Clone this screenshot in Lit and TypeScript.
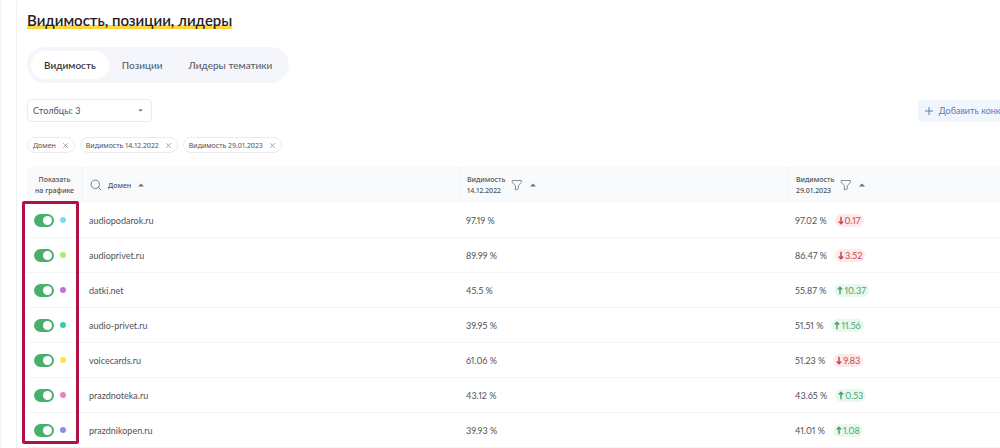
import { LitElement, html, css, svg } from "lit";
import { customElement, property, state } from "lit/decorators.js";
import { classMap } from "lit/directives/class-map.js";
import { styleMap } from "lit/directives/style-map.js";

interface Row {
  domain: string;
  color: string;
  before: string;
  after: string;
  delta: string;
  up: boolean;
}

const ROWS: Row[] = [
  { domain: "audiopodarok.ru", color: "#7fdcf0", before: "97.19 %", after: "97.02 %", delta: "0.17", up: false },
  { domain: "audioprivet.ru", color: "#a5ee72", before: "89.99 %", after: "86.47 %", delta: "3.52", up: false },
  { domain: "datki.net", color: "#c072e0", before: "45.5 %", after: "55.87 %", delta: "10.37", up: true },
  { domain: "audio-privet.ru", color: "#2fd0ae", before: "39.95 %", after: "51.51 %", delta: "11.56", up: true },
  { domain: "voicecards.ru", color: "#ffe34d", before: "61.06 %", after: "51.23 %", delta: "9.83", up: false },
  { domain: "prazdnoteka.ru", color: "#f27fc0", before: "43.12 %", after: "43.65 %", delta: "0.53", up: true },
  { domain: "prazdnikopen.ru", color: "#8a8cf0", before: "39.93 %", after: "41.01 %", delta: "1.08", up: true },
];

const TABS = ["Видимость", "Позиции", "Лидеры тематики"];
const CHIPS = ["Домен", "Видимость 14.12.2022", "Видимость 29.01.2023"];

const searchIcon = html`<svg width="12" height="12" viewBox="0 0 12 12" fill="none" stroke="#6b7078" aria-hidden="true">
  ${svg`<circle cx="5.3" cy="5.3" r="4.2" stroke-width="0.9"/><path d="M8.4 8.4 10.6 10.6" stroke-width="0.9" stroke-linecap="round"/>`}
</svg>`;

const filterIcon = html`<svg width="12" height="12" viewBox="0 0 12 12" fill="none" stroke="#7d828a" stroke-width="0.9" stroke-linejoin="round" aria-hidden="true">
  ${svg`<path d="M1.2 1.5h9.2v1.7L7.3 6.8v3L4.4 11V6.8L1.2 3.2z"/>`}
</svg>`;

const sortIcon = html`<svg width="6" height="4" viewBox="0 0 6 4" aria-hidden="true">
  ${svg`<path d="M0 3.6 3 0.4 6 3.6z" fill="#6b7078"/>`}
</svg>`;

@customElement("delta-badge")
export class DeltaBadge extends LitElement {
  @property() value = "";
  @property({ type: Boolean }) up = false;

  static styles = css`
    .badge {
      display: inline-flex;
      align-items: center;
      gap: 1px;
      height: 13px;
      padding: 0 3px;
      border-radius: 7px;
      background: #fde9ea;
      color: #c9474f;
    }
    .up {
      background: #e9f8ee;
      color: #4aa56c;
    }
    svg {
      display: block;
    }
  `;

  render() {
    const d = this.up ? "M3 8.2V1.4M0.8 3.6 3 1.3 5.2 3.6" : "M3 0.8V7.6M0.8 5.4 3 7.7 5.2 5.4";
    return html`<span class=${classMap({ badge: true, up: this.up })}>
      <svg width="6" height="9" viewBox="0 0 6 9" fill="none" stroke="currentColor" stroke-width="1.5" aria-hidden="true">
        ${svg`<path d=${d}/>`}
      </svg>${this.value}</span>`;
  }
}

@customElement("app-root")
export class AppRoot extends LitElement {
  @state() private tab = 0;

  static styles = css`
    * {
      box-sizing: border-box;
    }
    :host {
      display: block;
      overflow: hidden;
      height: 100vh;
      background: #fff;
      color: #4f5257;
      font: 9px/11px Lato, "Noto Sans", sans-serif;
      font-variant-numeric: proportional-nums;
    }
    button,
    select {
      margin: 0;
      border: 0;
      background: none;
      color: inherit;
      font: inherit;
      font-variant-numeric: inherit;
      cursor: pointer;
    }
    .page {
      padding-left: 15px;
      border-left: 1px solid #f4f4f6;
      min-height: 100%;
    }
    /* The card is wider than the window: the last column runs off to the right. */
    .card {
      width: calc(100% + 47px);
      margin-top: -8px;
      padding: 18px 10px 10px;
      border: 1px solid #efeff2;
      border-radius: 12px;
    }
    h2 {
      display: table;
      margin: 0 0 18px;
      color: #1f2023;
      font-size: 15px;
      font-weight: 600;
      line-height: 18px;
      background: linear-gradient(#fbd63f, #fbd63f) 0 14px / 100% 4px no-repeat;
    }
    .tabs {
      display: flex;
      width: fit-content;
      padding: 4px;
      border-radius: 18px;
      background: #f4f6fb;
    }
    .tab {
      height: 28px;
      padding: 0 13px;
      border-radius: 14px;
      font-size: 10px;
      font-weight: 500;
      color: #5b5e66;
    }
    .tab.active {
      background: #fff;
      color: #35373c;
      font-weight: 600;
    }
    .toolbar {
      display: flex;
      align-items: center;
      justify-content: space-between;
      margin: 16px 0 15px;
    }
    .columns {
      position: relative;
      display: flex;
      align-items: center;
    }
    .columns select {
      appearance: none;
      width: 125px;
      height: 23px;
      padding: 0 5px;
      border: 1px solid #ececf0;
      border-radius: 4px;
      background: #fff;
    }
    .columns svg {
      position: absolute;
      right: 9px;
      pointer-events: none;
    }
    .add {
      display: flex;
      align-items: center;
      gap: 6px;
      height: 22px;
      padding: 0 7px;
      border-radius: 3px;
      background: #f1f5fc;
      color: #5c7db5;
      white-space: nowrap;
    }
    .chips {
      display: flex;
      gap: 5px;
      margin: 0 0 14px;
      padding: 0;
      list-style: none;
    }
    .chip {
      display: flex;
      align-items: center;
      gap: 6px;
      height: 16px;
      padding: 0 5px;
      border: 1px solid #ececf0;
      border-radius: 8px;
      font-family: "Noto Sans", sans-serif;
      font-size: 7px;
    }
    .chip button {
      display: flex;
      padding: 0;
    }
    .grid {
      position: relative;
    }
    table {
      width: 100%;
      table-layout: fixed;
      border-collapse: separate;
      border-spacing: 0;
    }
    .c-show {
      width: 55px;
    }
    .c-domain {
      width: 377px;
    }
    .c-before {
      width: 329px;
    }
    th {
      height: 36px;
      padding: 0 7px;
      border-left: 1px solid #eff2f6;
      background: #f8fafc;
      text-align: left;
      font-family: "Noto Sans", sans-serif;
      font-size: 7px;
      font-weight: 500;
      line-height: 11px;
    }
    th:first-child {
      padding: 0;
      border-left: 0;
      border-radius: 4px 0 0 0;
      text-align: center;
    }
    .head {
      display: flex;
      align-items: center;
      gap: 6px;
    }
    .head button {
      display: flex;
      padding: 0;
    }
    .head button:last-child {
      padding-left: 1px;
    }
    td {
      height: 35px;
      padding: 0 7px;
      border-bottom: 1px solid #f5f5f7;
    }
    .show {
      display: flex;
      align-items: center;
      gap: 6px;
    }
    .switch {
      appearance: none;
      display: flex;
      width: 20px;
      height: 13px;
      margin: 0;
      padding: 2px;
      border-radius: 7px;
      background: #c9ccd2;
      cursor: pointer;
    }
    .switch::before {
      content: "";
      width: 9px;
      height: 9px;
      border-radius: 50%;
      background: #fff;
    }
    .switch:checked {
      justify-content: flex-end;
      background: #48b06c;
    }
    .dot {
      width: 6px;
      height: 6px;
      border-radius: 50%;
    }
    .change {
      display: flex;
      align-items: center;
      gap: 8px;
    }
    /* Frame that highlights the toggles over the first column. */
    .frame {
      position: absolute;
      top: 34px;
      bottom: 4px;
      left: -5px;
      width: 57px;
      border: 3px solid #b01245;
      border-radius: 2px;
      pointer-events: none;
    }
  `;

  private sortable(label: unknown, icon: unknown) {
    return html`<div class="head">
      <span>${label}</span>
      <button aria-label="Фильтр">${icon}</button>
      <button aria-label="Сортировать">${sortIcon}</button>
    </div>`;
  }

  render() {
    return html`<div class="page">
      <section class="card">
        <h2>Видимость, позиции, лидеры</h2>
        <div class="tabs" role="tablist">
          ${TABS.map(
            (t, i) => html`<button
              role="tab"
              aria-selected=${i === this.tab}
              class=${classMap({ tab: true, active: i === this.tab })}
              @click=${() => (this.tab = i)}
            >${t}</button>`
          )}
        </div>
        <div class="toolbar">
          <div class="columns">
            <select aria-label="Столбцы">
              <option>Столбцы: 3</option>
            </select>
            <svg width="5" height="3" viewBox="0 0 5 3" aria-hidden="true"><path d="M0.3 0.4h4.4L2.5 2.6z" fill="#55585e" /></svg>
          </div>
          <button class="add">
            <svg width="8" height="8" viewBox="0 0 8 8" stroke="currentColor" aria-hidden="true"><path d="M4 0v8M0 4h8" /></svg>
            Добавить конкурента
          </button>
        </div>
        <ul class="chips">
          ${CHIPS.map(
            (c) => html`<li class="chip">
              ${c}
              <button aria-label="Убрать">
                <svg width="7" height="7" viewBox="0 0 7 7" stroke="#8d9097" stroke-width="0.8" aria-hidden="true"><path d="M1.2 1.2l4.6 4.6M5.8 1.2L1.2 5.8" /></svg>
              </button>
            </li>`
          )}
        </ul>
        <div class="grid">
          <table>
            <colgroup>
              <col class="c-show" />
              <col class="c-domain" />
              <col class="c-before" />
              <col />
            </colgroup>
            <thead>
              <tr>
                <th>Показать<br />на графике</th>
                <th>
                  <div class="head">
                    <button aria-label="Поиск">${searchIcon}</button>
                    <span>Домен</span>
                    <button aria-label="Сортировать">${sortIcon}</button>
                  </div>
                </th>
                <th>${this.sortable(html`Видимость<br />14.12.2022`, filterIcon)}</th>
                <th>${this.sortable(html`Видимость<br />29.01.2023`, filterIcon)}</th>
              </tr>
            </thead>
            <tbody>
              ${ROWS.map(
                (r) => html`<tr>
                  <td>
                    <div class="show">
                      <input class="switch" type="checkbox" role="switch" checked aria-label=${r.domain} />
                      <span class="dot" style=${styleMap({ background: r.color })}></span>
                    </div>
                  </td>
                  <td>${r.domain}</td>
                  <td>${r.before}</td>
                  <td>
                    <div class="change">
                      ${r.after}<delta-badge value=${r.delta} ?up=${r.up}></delta-badge>
                    </div>
                  </td>
                </tr>`
              )}
            </tbody>
          </table>
          <div class="frame"></div>
        </div>
      </section>
    </div>`;
  }
}
